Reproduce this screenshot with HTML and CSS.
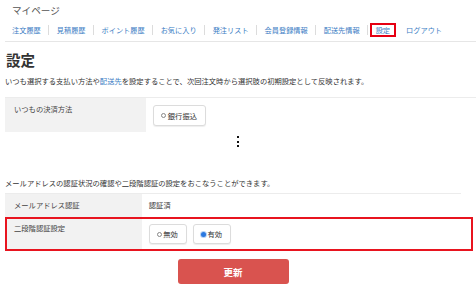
FILE: index.html
```html
<!DOCTYPE html>
<html lang="ja">
<head>
<meta charset="utf-8">
<title>設定</title>
<link rel="stylesheet" href="styles.css">
</head>
<body>
<div class="page">
  <header class="top">
    <div class="mypage">マイページ</div>
    <nav class="tabs">
      <a class="tab" href="#">注文履歴</a>
      <a class="tab" href="#">見積履歴</a>
      <a class="tab" href="#">ポイント履歴</a>
      <a class="tab" href="#">お気に入り</a>
      <a class="tab" href="#">発注リスト</a>
      <a class="tab" href="#">会員登録情報</a>
      <a class="tab" href="#">配送先情報</a>
      <a class="tab current" href="#"><span class="sel">設定</span></a>
      <a class="tab nosep" href="#">ログアウト</a>
    </nav>
  </header>
  <main class="content">
    <h1 class="title">設定</h1>
    <p class="desc">いつも選択する支払い方法や<a class="link" href="#">配送先</a>を設定することで、次回注文時から選択肢の初期設定として反映されます。</p>
    <div class="table wide">
      <div class="row tall">
        <div class="label">いつもの決済方法</div>
        <div class="value">
          <span class="choice"><span class="radio"></span>銀行振込</span>
        </div>
      </div>
    </div>
    <div class="more"><span class="dot"></span><span class="dot"></span><span class="dot"></span></div>
    <p class="desc desc2">メールアドレスの認証状況の確認や二段階認証の設定をおこなうことができます。</p>
    <div class="table">
      <div class="row short">
        <div class="label">メールアドレス認証</div>
        <div class="value text">認証済</div>
      </div>
      <div class="row tall marked">
        <div class="label">二段階認証設定</div>
        <div class="value choices">
          <span class="choice"><span class="radio"></span>無効</span>
          <span class="choice"><span class="radio on"></span>有効</span>
        </div>
      </div>
    </div>
    <button class="submit" type="button">更新</button>
  </main>
</div>
</body>
</html>
```
FILE: styles.css
```css
html, body {
  margin: 0;
  padding: 0;
  background: #fff;
}

body {
  font-family: "Noto Sans CJK JP", "Noto Sans", sans-serif;
  color: #333;
}

.page {
  padding: 4px 0 0 5px;
  width: 471px;
}

.top {
  border-bottom: 1px solid #e6e6e6;
  padding-bottom: 4px;
}

.mypage {
  margin-left: 7px;
  font-size: 9.6px;
  line-height: 12px;
  color: #555;
}

.tabs {
  display: flex;
  align-items: center;
  height: 15px;
  margin-top: 6px;
  padding-left: 7px;
  font-size: 7.2px;
  line-height: 10px;
}

.tab {
  color: #3b7dc4;
  text-decoration: none;
  padding: 0 7.5px;
  border-left: 1px solid #dcdcdc;
  white-space: nowrap;
}

.tab:first-child {
  padding-left: 0;
  border-left: none;
}

.tab.nosep {
  border-left-color: transparent;
}

.sel {
  border: 2px solid #e60012;
  padding: 0 4px;
  margin: 0 -6px;
}

.content {
  width: 456px;
}

.title {
  margin: 9px 0 0 1px;
  font-size: 14.5px;
  line-height: 18px;
  font-weight: bold;
  color: #333;
}

.desc {
  margin: 7px 0 0;
  font-size: 7.3px;
  line-height: 10px;
  color: #333;
  white-space: nowrap;
}

.link {
  color: #3b7dc4;
  text-decoration: none;
}

.table {
  margin-top: 5px;
  border-top: 1px solid #ececec;
}

.table.wide {
  margin-top: 11px;
  margin-right: -15px;
}

.row {
  display: grid;
  grid-template-columns: 30% 1fr;
}

.label {
  background: #f2f2f2;
  padding: 5.5px 0 0 9px;
  font-size: 7.3px;
  line-height: 10px;
  color: #444;
}

.value {
  padding: 7px 0 6px 7px;
  font-size: 7.3px;
  line-height: 10px;
}

.short .value {
  padding: 5.5px 0 7.5px 7px;
}

.marked {
  position: relative;
}

.marked::after {
  content: "";
  position: absolute;
  top: 0;
  bottom: 0;
  left: 0;
  right: -12px;
  border: 2px solid #e8141f;
  pointer-events: none;
}

.marked .value {
  padding: 7px 0 7px 7px;
}

.choices {
  display: flex;
  gap: 6px;
}

.choice {
  display: inline-flex;
  align-items: center;
  gap: 1.5px;
  box-sizing: border-box;
  height: 21px;
  padding: 0 8px 0 7px;
  border: 1px solid #dcdcdc;
  border-radius: 3px;
  background: #fff;
  box-shadow: 0 1px 1px rgba(0, 0, 0, 0.07);
  font-size: 7.3px;
  color: #333;
}

.choices .choice {
  height: 20px;
}

.radio {
  width: 5px;
  height: 5px;
  box-sizing: border-box;
  border-radius: 50%;
  border: 0.8px solid #888;
  background: #fff;
}

.radio.on {
  border: none;
  background: #2b78e0;
  box-shadow: 0 0 0 1px #b9d2f3;
}

.more {
  display: flex;
  flex-direction: column;
  gap: 2.5px;
  width: 2px;
  margin: 4px 0 0 232px;
}

.dot {
  width: 2px;
  height: 2px;
  background: #111;
}

.desc2 {
  margin-top: 31px;
}

.submit {
  display: block;
  width: 111px;
  height: 25px;
  margin: 8px auto 0;
  border: none;
  border-radius: 3px;
  background: #d9534f;
  color: #fff;
  font-family: inherit;
  font-size: 9.5px;
  font-weight: bold;
  padding: 0;
}
```
